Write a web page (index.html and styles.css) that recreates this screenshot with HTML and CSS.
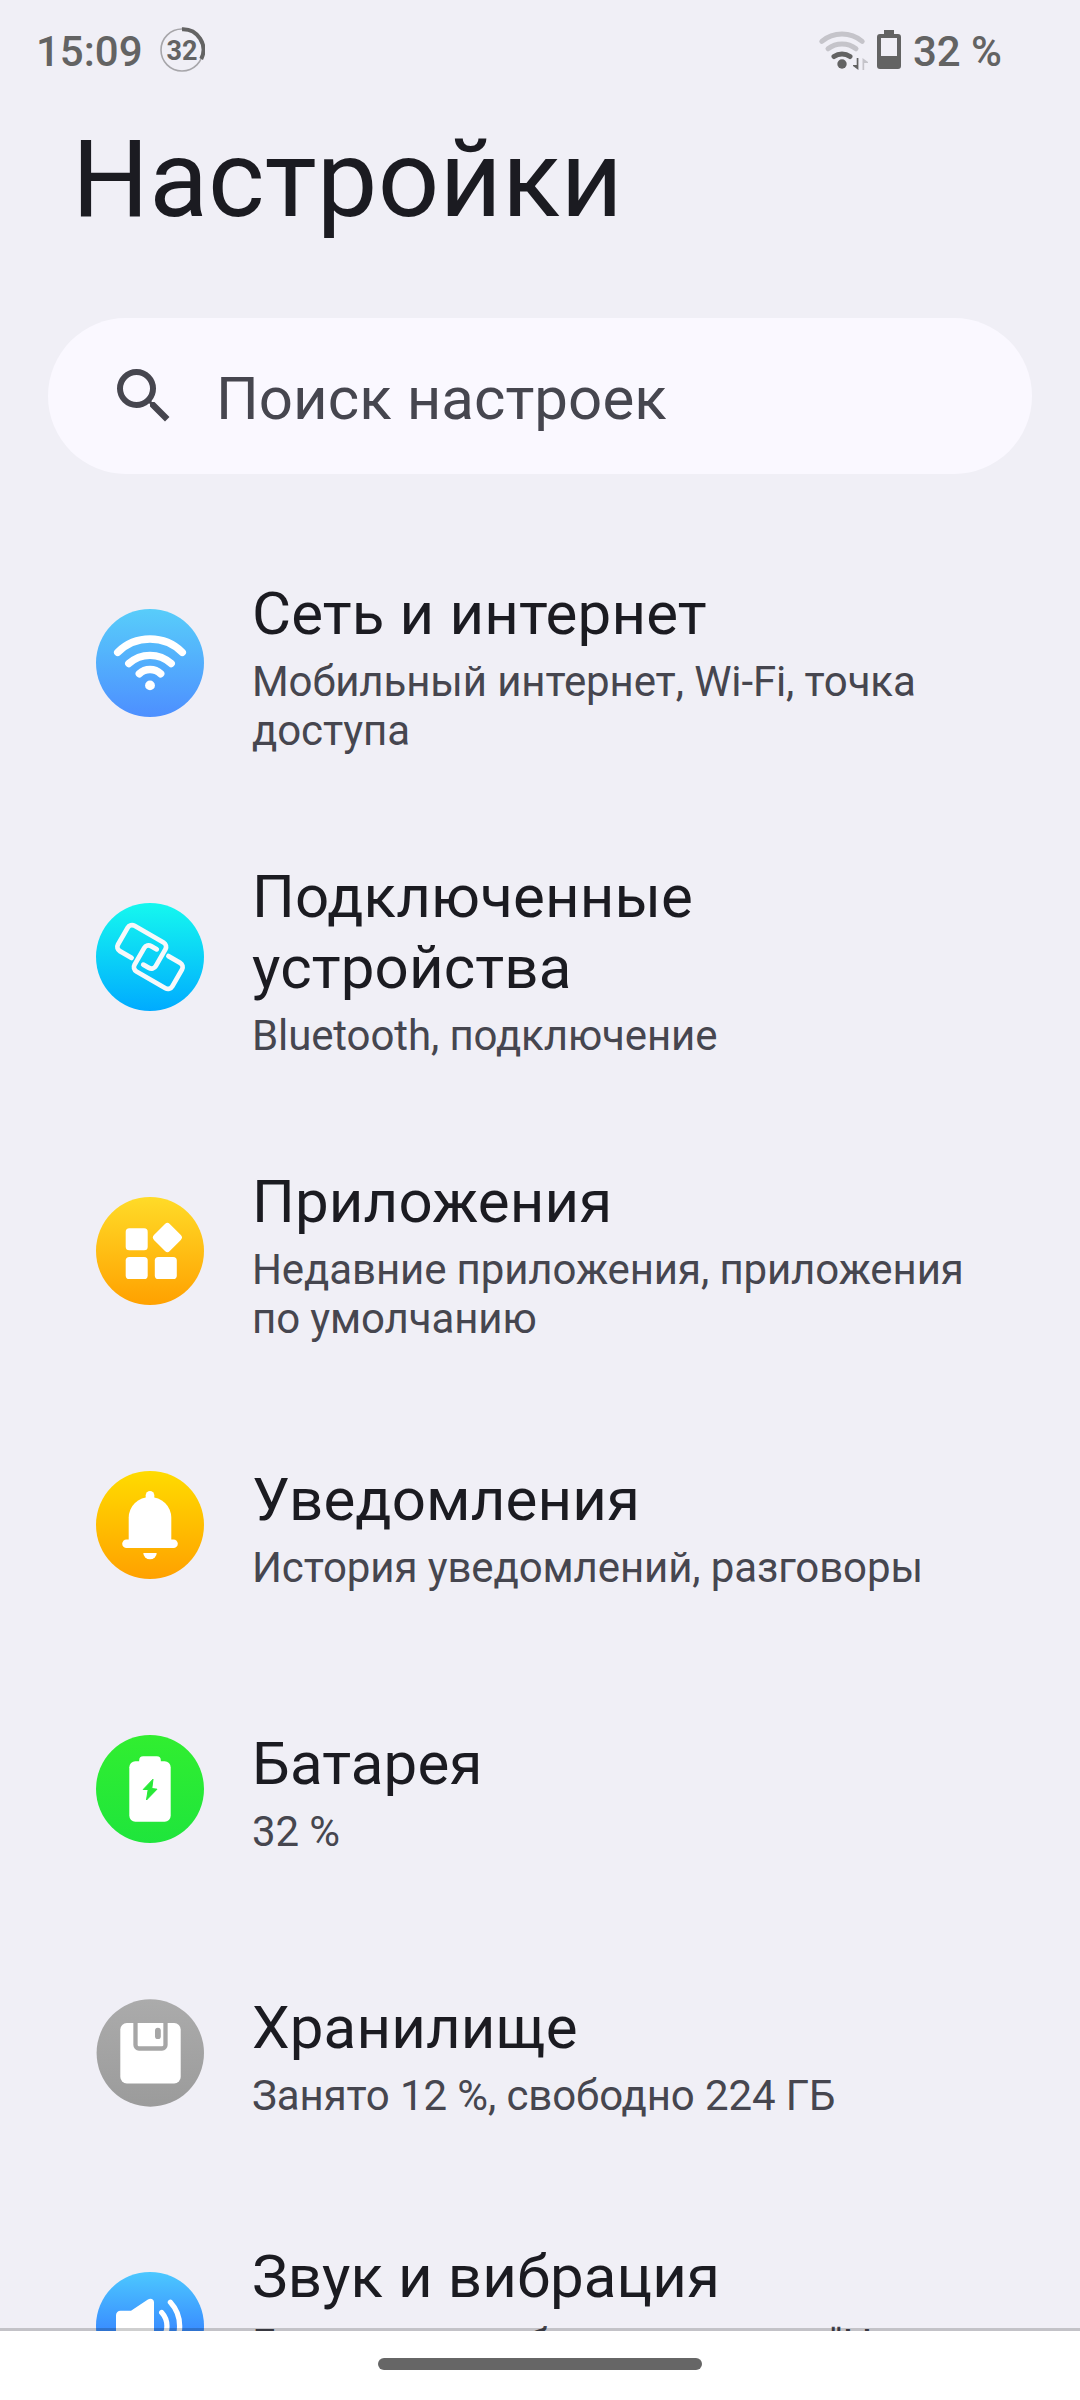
FILE: index.html
```html
<!DOCTYPE html>
<html lang="ru">
<head>
<meta charset="utf-8">
<title>Настройки</title>
<link rel="stylesheet" href="styles.css">
</head>
<body>
<div class="screen">
  <header class="status">
    <span class="clock">15:09</span>
    <svg class="ring" viewBox="0 0 46 46">
      <circle cx="23" cy="23" r="21" fill="none" stroke="#a7a6aa" stroke-width="1.6"/>
      <path d="M23 2.3A20.5 20.5 0 0 1 42.2 32" fill="none" stroke="#636363" stroke-width="4"/>
      <text x="23" y="33" text-anchor="middle" class="ring-text">32</text>
    </svg>
    <span class="spacer"></span>
    <svg class="wifi" viewBox="0 0 50 42" fill="none" stroke-linecap="round" stroke-width="5">
      <path d="M3.8 12.3a31.5 31.5 0 0 1 40.4 0" stroke="#c5c4ca"/>
      <path d="M10 19.8a22.5 22.5 0 0 1 28 0" stroke="#c5c4ca"/>
      <path d="M16 27.6a13.5 13.5 0 0 1 16 0" stroke="#636363"/>
      <circle cx="24" cy="35" r="4.7" fill="#636363"/>
      <path d="M38.700 29h1.700v12L35 37V36h3.700z" fill="#636363"/>
      <path d="M44.500 29l5.500 4v1h-3.800v7h-1.700z" fill="#c5c4ca"/>
    </svg>
    <svg class="cell" viewBox="0 0 24 39">
      <path fill="#636363" fill-rule="evenodd" d="M7 0h10v4h4a3 3 0 0 1 3 3v29a3 3 0 0 1-3 3H3a3 3 0 0 1-3-3V7a3 3 0 0 1 3-3h4zM4 8v18h16V8z"/>
    </svg>
    <span class="percent">32 %</span>
  </header>

  <h1 class="title">Настройки</h1>

  <div class="search">
    <svg class="search-icon" viewBox="0 0 24 24"><path fill="#46464f" d="M15.5 14h-.79l-.28-.27A6.47 6.47 0 0 0 16 9.5 6.5 6.5 0 1 0 9.5 16c1.61 0 3.09-.59 4.23-1.57l.27.28v.79l5 4.99L20.49 19zm-6 0a4.5 4.5 0 1 1 0-9 4.5 4.5 0 0 1 0 9z"/></svg>
    <span class="search-text">Поиск настроек</span>
  </div>

  <main class="list">
    <section class="row tall">
      <svg class="icon" viewBox="0 0 108 108">
        <defs><linearGradient id="g1" x2="0" y2="1"><stop stop-color="#58cdfa"/><stop offset="1" stop-color="#4d8fff"/></linearGradient></defs>
        <circle cx="54" cy="54" r="54" fill="url(#g1)"/>
        <g fill="none" stroke="#fff" stroke-width="7.4" stroke-linecap="round">
          <path d="M21.7 43.3a46 46 0 0 1 64.6 0"/><path d="M32.8 54.6a31.4 31.4 0 0 1 42.4 0"/><path d="M43.3 64.8a15.5 15.5 0 0 1 21.4 0"/>
        </g>
        <circle cx="54" cy="76.4" r="4.9" fill="#fff"/>
      </svg>
      <div class="text"><div class="name">Сеть и интернет</div><div class="desc">Мобильный интернет, Wi-Fi, точка<br>доступа</div></div>
    </section>

    <section class="row double">
      <svg class="icon" viewBox="0 0 108 108">
        <defs><linearGradient id="g2" x2="0" y2="1"><stop stop-color="#15f8ef"/><stop offset="1" stop-color="#00abff"/></linearGradient></defs>
        <circle cx="54" cy="54" r="54" fill="url(#g2)"/>
        <g fill="none" stroke="#f7f8fa" stroke-width="4.8" stroke-linecap="round" transform="translate(54 54) rotate(30)">
          <path id="link" d="M-15.5 10H-29a5 5 0 0 1-5-5V-14.3a5 5 0 0 1 5-5H4.500a5 5 0 0 1 5 5V5a5 5 0 0 1-5 5H-2"/>
          <use href="#link" transform="rotate(180)"/>
        </g>
      </svg>
      <div class="text"><div class="name">Подключенные<br>устройства</div><div class="desc">Bluetooth, подключение</div></div>
    </section>

    <section class="row tall">
      <svg class="icon" viewBox="0 0 108 108">
        <defs><linearGradient id="g3" x2="0" y2="1"><stop stop-color="#ffdb28"/><stop offset="1" stop-color="#ffa100"/></linearGradient></defs>
        <circle cx="54" cy="54" r="54" fill="url(#g3)"/>
        <g fill="#fff">
          <rect x="29.700" y="31.300" width="22" height="22" rx="3.600"/><rect x="29.700" y="60" width="22" height="22" rx="3.600"/><rect x="58.800" y="60" width="22" height="22" rx="3.600"/>
          <rect x="60.200" y="29.300" width="22.400" height="22.400" rx="3.400" transform="rotate(45 71.400 40.500)"/>
        </g>
      </svg>
      <div class="text"><div class="name">Приложения</div><div class="desc">Недавние приложения, приложения<br>по умолчанию</div></div>
    </section>

    <section class="row">
      <svg class="icon" viewBox="0 0 108 108">
        <defs><linearGradient id="g4" x2="0" y2="1"><stop stop-color="#ffdb00"/><stop offset="1" stop-color="#ffa100"/></linearGradient></defs>
        <circle cx="54" cy="54" r="54" fill="url(#g4)"/>
        <g fill="#fff">
          <rect x="49.700" y="20" width="8.600" height="14" rx="4.300"/>
          <path d="M32.700 70V46.500a21.300 20.500 0 0 1 42.600 0V70z"/>
          <rect x="26.200" y="68.500" width="55.600" height="8.600" rx="4.300"/>
          <path d="M47.300 82h13.400a6.700 6.300 0 0 1-13.400 0z"/>
        </g>
      </svg>
      <div class="text"><div class="name">Уведомления</div><div class="desc">История уведомлений, разговоры</div></div>
    </section>

    <section class="row">
      <svg class="icon" viewBox="0 0 108 108">
        <defs><linearGradient id="g5" x2="0" y2="1"><stop stop-color="#31ee30"/><stop offset="1" stop-color="#1fe53c"/></linearGradient></defs>
        <circle cx="54" cy="54" r="54" fill="url(#g5)"/>
        <rect x="33.300" y="26.300" width="41.400" height="60.500" rx="6" fill="#fff"/>
        <rect x="43.200" y="21.200" width="21.600" height="12" rx="4" fill="#fff"/>
        <path d="M57 44.200 47.200 54.500h5L50.500 65 61 54.200 55.800 53.500z" fill="#27e937" stroke="#27e937" stroke-linejoin="round"/>
      </svg>
      <div class="text"><div class="name">Батарея</div><div class="desc">32 %</div></div>
    </section>

    <section class="row">
      <svg class="icon" viewBox="0 0 108 108">
        <defs><linearGradient id="g6" x2="0" y2="1"><stop stop-color="#ababab"/><stop offset="1" stop-color="#9b9b9b"/></linearGradient></defs>
        <circle cx="54.300" cy="54" r="53.700" fill="url(#g6)"/>
        <rect x="24.300" y="24" width="60.400" height="60.500" rx="6.500" fill="#fff"/>
        <path d="M39.500 23.500V46a3.500 3.500 0 0 0 3.500 3.500H66a3.500 3.500 0 0 0 3.500-3.500V23.500" fill="none" stroke="#a6a6a6" stroke-width="4.300"/>
        <rect x="59" y="28.700" width="5.800" height="11.400" rx="2.900" fill="#a6a6a6"/>
      </svg>
      <div class="text"><div class="name">Хранилище</div><div class="desc">Занято 12 %, свободно 224 ГБ</div></div>
    </section>

    <section class="row last">
      <svg class="icon" viewBox="0 0 108 108">
        <defs><linearGradient id="g7" x2="0" y2="1"><stop stop-color="#4cc8ff"/><stop offset=".5" stop-color="#3b92ff"/><stop offset="1" stop-color="#2b60ff"/></linearGradient></defs>
        <circle cx="54" cy="54" r="54" fill="url(#g7)"/>
        <path d="M24.500 38.700H35L51.500 27.800c3-2 6.500-.8 6.500 2.500V78c0 3.300-3.500 4.500-6.500 2.500L35 69.300H24.500a4.500 4.500 0 0 1-4.500-4.500V43.200a4.500 4.500 0 0 1 4.500-4.500z" fill="#fff"/>
        <path d="M65.700 40.500a20 20 0 0 1 0 27M74.400 30.300a35 35 0 0 1 0 47.400" fill="none" stroke="#fff" stroke-width="5.300" stroke-linecap="round"/>
      </svg>
      <div class="text"><div class="name">Звук и вибрация</div><div class="desc">Громкость, вибрация, режим "Не<br>беспокоить"</div></div>
    </section>
  </main>

  <footer class="nav"><div class="handle"></div></footer>
</div>
</body>
</html>
```
FILE: styles.css
```css
* { box-sizing: border-box; }
body {
  margin: 0;
  background: #f0eff6;
  font-family: Roboto, "Noto Sans", sans-serif;
}
svg { display: block; flex: none; }
.screen {
  width: 1080px;
  height: 2400px;
  overflow: hidden;
  display: flex;
  flex-direction: column;
}
.status {
  flex: none;
  height: 102px;
  padding: 0 78px 0 36px;
  display: flex;
  align-items: flex-start;
  color: #636363;
  font-size: 42px;
  font-weight: 500;
  line-height: 50px;
}
.clock { margin-top: 27px; width: 105px; white-space: nowrap; }
.percent { margin-top: 27px; margin-left: 12px; white-space: nowrap; }
.ring { width: 46px; height: 46px; margin: 27px 0 0 18px; }
.ring-text { font-size: 27px; font-weight: 700; fill: #636363; }
.spacer { flex: 1; }
.wifi { width: 50px; height: 42px; margin-top: 29px; }
.cell { width: 24px; height: 39px; margin: 30px 0 0 9px; }
.title {
  flex: none;
  margin: 0;
  padding: 14px 0 0 72px;
  height: 216px;
  font-size: 108px;
  font-weight: 400;
  line-height: 126px;
  letter-spacing: 0.15px;
  color: #1b1b21;
}
.search {
  flex: none;
  height: 156px;
  margin: 0 48px;
  padding-left: 60px;
  border-radius: 78px;
  background: #faf8ff;
  display: flex;
  align-items: center;
  gap: 36px;
}
.search-icon { width: 72px; height: 72px; }
.search-text {
  font-size: 60px;
  line-height: 70px;
  padding-top: 5px;
  letter-spacing: 0.05px;
  color: #46464f;
}
.list {
  flex: 1;
  min-height: 0;
  overflow: hidden;
  padding-top: 47px;
}
.row {
  height: 264px;
  padding-left: 96px;
  display: flex;
  align-items: center;
  gap: 48px;
}
.row.tall { height: 284px; }
.row.last { height: 282px; }
.row.double { height: 304px; }
.icon { width: 108px; height: 108px; }
.text { padding-top: 6px; white-space: nowrap; }
.tall .text, .double .text, .last .text { padding-top: 7px; }
.name {
  font-size: 60px;
  line-height: 71px;
  letter-spacing: 0.15px;
  color: #1b1b21;
}
.desc {
  margin-top: 8px;
  font-size: 42px;
  line-height: 49px;
  letter-spacing: -0.11px;
  color: #46464f;
}
.nav {
  flex: none;
  position: relative;
  height: 72px;
  margin-top: -3px;
  padding-top: 27px;
  background: #fff;
  background-clip: padding-box;
  border-top: 3px solid rgba(0, 0, 0, 0.19);
  display: flex;
  justify-content: center;
}
.handle {
  width: 324px;
  height: 12px;
  border-radius: 6px;
  background: #666;
}
```
